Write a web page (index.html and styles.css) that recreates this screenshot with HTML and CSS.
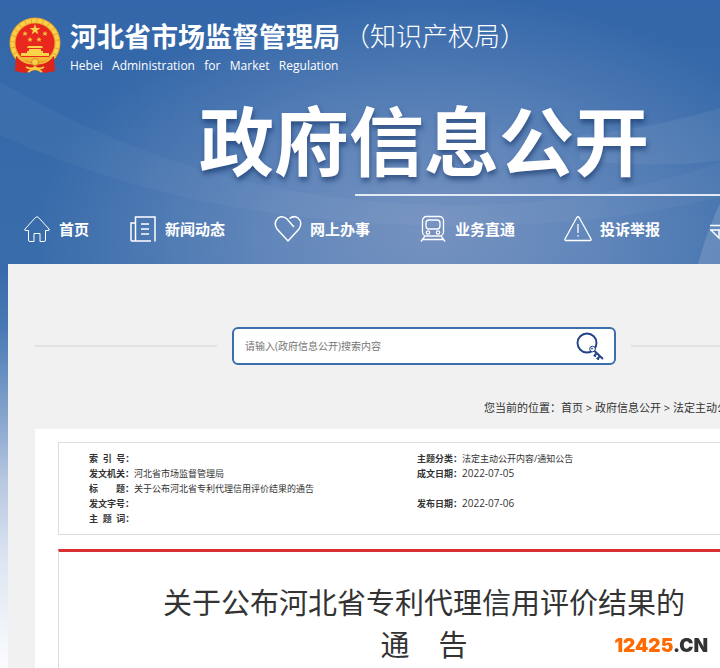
FILE: index.html
```html
<!DOCTYPE html>
<html lang="zh-CN">
    <head>
        <meta charset="UTF-8">
        <meta name="viewport" content="width=device-width, initial-scale=1">
        <title>河北省市场监督管理局</title>
        <link rel="stylesheet" href="styles.css">
    </head>
    <body>
        <div class="page">
            <header class="header">
                <svg class="waves" viewBox="0 0 848 264" preserveAspectRatio="none" aria-hidden="true">
                    <path d="M0 82 C120 150 260 205 460 205 C600 205 740 170 848 100 L848 150 C740 205 600 226 460 226 C270 226 120 190 0 135Z" fill="#fff" opacity=".035"/>
                    <path d="M580 135 C660 128 710 112 848 70 L848 130 C760 160 680 172 580 160Z" fill="#fff" opacity=".06"/>
                    <path d="M698 264 Q714 205 740 170 L848 120 V264Z" fill="#fff" opacity=".14"/>
                </svg>

                <div class="brand">
                    <svg class="emblem" viewBox="0 0 52 56" aria-hidden="true">
                        <circle cx="26" cy="26" r="25.5" fill="#e9a52b"/>
                        <circle cx="26" cy="26" r="22.5" fill="none" stroke="#f8d04a" stroke-width="4" stroke-dasharray="5 1"/>
                        <circle cx="26" cy="26" r="19.5" fill="#e8281e"/>
                        <path d="M26 7 L27.3 11 H31.4 L28.1 13.4 L29.3 17.3 L26 14.9 L22.7 17.3 L23.9 13.4 L20.6 11 H24.7Z" fill="#fbd348"/>
                        <g fill="#f9c23c">
                            <path id="star" d="M16 14 l.8 1.8 h1.9 l-1.5 1.2 .6 1.9 -1.8 -1.1 -1.8 1.1 .6 -1.9 -1.5 -1.2 h1.9Z"/>
                            <use href="#star" x="20"/>
                            <use href="#star" x="5" y="6"/>
                            <use href="#star" x="14" y="6"/>
                        </g>
                        <path d="M19 29 H33 L34 31 H18Z M20 32 H32 V34 H34 V36 H40 V39 H12 V36 H18 V34 H20Z" fill="#fbd348"/>
                        <path d="M12 40 H40 L36 46 H16Z" fill="#f3b936"/>
                        <path d="M7 39 Q16 46 26 45 Q36 46 45 39 L46 54 L36 56 L26 53 L16 56 L6 54Z" fill="#dc241b"/>
                        <path d="M9 40 Q17 48 26 46 Q35 48 43 40" fill="none" stroke="#f3b936" stroke-width="2"/>
                        <circle cx="26" cy="45" r="3.5" fill="#f9cf4a" stroke="#d98a22"/>
                        <path d="M17 50 Q22 53 26 50 Q30 53 35 50 M19 55 Q26 49 33 55" fill="none" stroke="#f8cb42" stroke-width="2"/>
                    </svg>
                    <div class="names">
                        <div class="name">河北省市场监督管理局</div>
                        <div class="english">Hebei&nbsp;&nbsp; Administration&nbsp;&nbsp; for&nbsp;&nbsp; Market&nbsp;&nbsp; Regulation</div>
                    </div>
                    <div class="office">（知识产权局）</div>
                </div>

                <h1>政府信息公开</h1>
                <div class="underline"></div>

                <nav>
                    <ul class="menu">
                        <li><a href="#">
                            <svg viewBox="0 0 28 28"><path d="M2 14 L12.5 2.5 Q14 1 15.5 2.5 L26 14 Q27 15.500 25 15.500 H22.500 V25 Q22.500 26.500 21 26.500 H17 V18.500 H11 V26.500 H7 Q5.500 26.500 5.500 25 V15.500 H3 Q1 15.500 2 14Z"/></svg>
                            首页</a></li>
                        <li><a href="#">
                            <svg viewBox="0 0 28 28"><path stroke-width="1.5" d="M6.500 26 V2 H26 V26.500 M22 26 H3 Q2 26 2 25 V8 H6 M12 9 H20 M12 14 H20 M12 19 H20"/></svg>
                            新闻动态</a></li>
                        <li><a href="#">
                            <svg viewBox="0 0 28 28"><path stroke-width="1.5" d="M20 12 L13 4 Q9 0 4 3 Q-1 8 3 14 L14 26 L25 14 Q29 7 24 3 Q20 0 15.500 3.500"/></svg>
                            网上办事</a></li>
                        <li><a href="#">
                            <svg viewBox="0 0 28 28"><g stroke-width="1.3"><rect x="3.500" y="1.500" width="21" height="19.500" rx="4"/><rect x="7" y="5" width="14" height="9" rx="3"/><circle cx="9" cy="17.500" r="1.700"/><circle cx="19" cy="17.500" r="1.700"/><path d="M6 21 L2 26.500 M22 21 L26 26.500 M4 24.500 H24"/></g></svg>
                            业务直通</a></li>
                        <li><a href="#">
                            <svg viewBox="0 0 28 28"><path stroke-width="1.3" d="M12.800 2.500 Q14 1 15.200 2.500 L27 24 Q27.500 25.500 26 25.500 H2 Q.5 25.500 1 24Z M14 9 V18 M14 20 V21.500"/></svg>
                            投诉举报</a></li>
                        <li><a href="#" aria-label="互动交流">
                            <svg viewBox="0 0 28 28"><path stroke-width="1.5" d="M1 10.500 H26 M1 15 H26 M2 15 L10 23 V15"/></svg>
                            </a></li>
                    </ul>
                </nav>
            </header>

            <main>
                <form class="search">
                    <div class="box">
                        <input type="text" aria-label="搜索" placeholder="请输入(政府信息公开)搜索内容">
                        <button type="button" aria-label="搜索">
                            <svg viewBox="0 0 28 28" fill="none" stroke="#1f4288">
                                <circle cx="11" cy="11" r="9.500" stroke-width="1.900"/>
                                <circle cx="16.500" cy="17" r="2.800" fill="#fff"/>
                                <circle cx="16" cy="16.500" r=".6"/>
                                <path d="M18.500 19 L27 27 M20.500 21 L18.500 23.500 L20 24.500 M24 24 L21.500 26.500 L23 27.500" stroke-width="1.900"/>
                            </svg>
                        </button>
                    </div>
                </form>

                <div class="crumbs">您当前的位置：<a href="#">首页</a> &gt; <a href="#">政府信息公开</a> &gt; <a href="#">法定主动公开内容</a></div>

                <div class="content">
                    <div class="info">
                        <table>
                            <tr>
                                <th>索&nbsp;&nbsp;引&nbsp;&nbsp;号：</th>
                                <td class="first"></td>
                                <th>主题分类：</th>
                                <td>法定主动公开内容/通知公告</td>
                            </tr>
                            <tr>
                                <th>发文机关：</th>
                                <td>河北省市场监督管理局</td>
                                <th>成文日期：</th>
                                <td class="date">2022-07-05</td>
                            </tr>
                            <tr>
                                <th>标　　题：</th>
                                <td>关于公布河北省专利代理信用评价结果的通告</td>
                                <th></th>
                                <td></td>
                            </tr>
                            <tr>
                                <th>发文字号：</th>
                                <td></td>
                                <th>发布日期：</th>
                                <td class="date">2022-07-06</td>
                            </tr>
                            <tr>
                                <th>主&nbsp;&nbsp;题&nbsp;&nbsp;词：</th>
                                <td></td>
                                <th></th>
                                <td></td>
                            </tr>
                        </table>
                    </div>

                    <article>
                        <h2>关于公布河北省专利代理信用评价结果的<br>通　告</h2>
                    </article>
                </div>
            </main>
        </div>

        <div class="mark"><span>12425</span>.CN</div>
    </body>
</html>
```
FILE: styles.css
```css
* {
    box-sizing: border-box;
}
html {
    overflow: hidden;
}
body {
    margin: 0;
    min-height: 100vh;
    overflow: hidden;
    font-family: "Open Sans", "Noto Sans CJK SC", sans-serif;
    color: #333;
    background: linear-gradient(#386baa 270px, #4a7ab5 330px, #8fabd1 430px, #b7c7e0 480px, #dce5f2 560px, #fbfcfe 668px);
}
a {
    color: inherit;
    text-decoration: none;
}
.page {
    display: flex;
    flex-direction: column;
    min-width: 848px;
    min-height: 100vh;
}

/* blue banner */
.header {
    position: relative;
    height: 264px;
    color: #fff;
    background:
        radial-gradient(ellipse 400px 240px at 430px 235px, #7592c0 0%, rgba(112, 144, 192, 0.75) 40%, rgba(56, 107, 170, 0) 100%),
        linear-gradient(#3467a9, #386caa);
}
.waves {
    position: absolute;
    top: 0;
    left: 0;
    width: 100%;
    height: 100%;
}
.brand {
    position: relative;
    display: flex;
    padding: 17px 0 0 9px;
    height: 96px;
}
.emblem {
    width: 52px;
    height: 56px;
    margin-right: 9px;
}
.name {
    font-size: 27px;
    font-weight: bold;
    line-height: 40px;
}
.english {
    font-size: 12px;
    line-height: 18px;
}
.office {
    margin-left: 4px;
    font-family: "Noto Sans CJK SC", sans-serif;
    font-size: 26px;
    font-weight: 300;
    line-height: 36px;
}
h1 {
    position: relative;
    margin: 0;
    font-size: 75px;
    line-height: 90px;
    text-align: center;
    text-shadow: 1px 4px 5px rgba(20, 50, 100, 0.6);
}
.underline {
    position: relative;
    height: 2px;
    margin: 8px 0 0 355px;
    background-color: #e3eaf4;
}
.menu {
    position: relative;
    display: grid;
    grid-template-columns: 106px repeat(5, 145px);
    margin: 0;
    padding: 19px 0 0 23px;
    list-style: none;
}
.menu a {
    display: flex;
    align-items: center;
    gap: 8px;
    font-size: 15px;
    font-weight: bold;
    line-height: 28px;
}
.menu svg {
    width: 28px;
    height: 28px;
    fill: none;
    stroke: #fff;
}

/* grey sheet under the banner */
main {
    display: flex;
    flex-direction: column;
    flex: 1;
    margin: 0 8px;
    padding: 63px 27px 0;
    background-color: #f1f1f1;
}
.search {
    display: flex;
    align-items: center;
    gap: 15px;
}
.search::before, .search::after {
    content: "";
    flex: 1;
    height: 2px;
    background-color: #e2e2e2;
}
.box {
    display: flex;
    align-items: center;
    width: 384px;
    height: 38px;
    padding: 0 10px 0 11px;
    border: 2px solid #3a6fae;
    border-radius: 6px;
    background-color: #fff;
}
.box input {
    flex: 1;
    padding: 0;
    border: 0;
    outline: 0;
    background: none;
    font-family: inherit;
    font-size: 10px;
}
.box input::placeholder {
    color: #757575;
}
.box button {
    width: 28px;
    height: 28px;
    padding: 0;
    border: 0;
    background: none;
}
.box button svg {
    display: block;
}
.crumbs {
    margin-left: 449px;
    padding: 33px 0 11px;
    font-size: 11px;
    line-height: 20px;
    white-space: nowrap;
}
.content {
    display: flex;
    flex-direction: column;
    flex: 1;
    padding: 13px 23px 0;
    background-color: #fff;
}
.info {
    padding: 8px 30px;
    border: 1px solid #ddd;
}
table {
    width: 100%;
    table-layout: fixed;
    border-collapse: collapse;
    font-size: 9px;
    line-height: 15px;
    text-align: left;
}
th {
    width: 45px;
}
th, td {
    height: 15px;
    padding: 0;
    white-space: nowrap;
}
.first {
    width: 283px;
}
.date {
    font-size: 10px;
}
article {
    flex: 1;
    margin-top: 14px;
    padding: 30px 0;
    border: 1px solid #ddd;
    border-top: 3px solid #d92f30;
    border-bottom: 0;
}
h2 {
    margin: 0;
    font-size: 29px;
    font-weight: normal;
    line-height: 42px;
    text-align: center;
}

/* site mark over the corner */
.mark {
    position: fixed;
    right: 12px;
    bottom: 10px;
    font-family: Inter, sans-serif;
    font-size: 19px;
    font-weight: 900;
    line-height: 24px;
}
.mark span {
    color: #ff6a00;
}
```
